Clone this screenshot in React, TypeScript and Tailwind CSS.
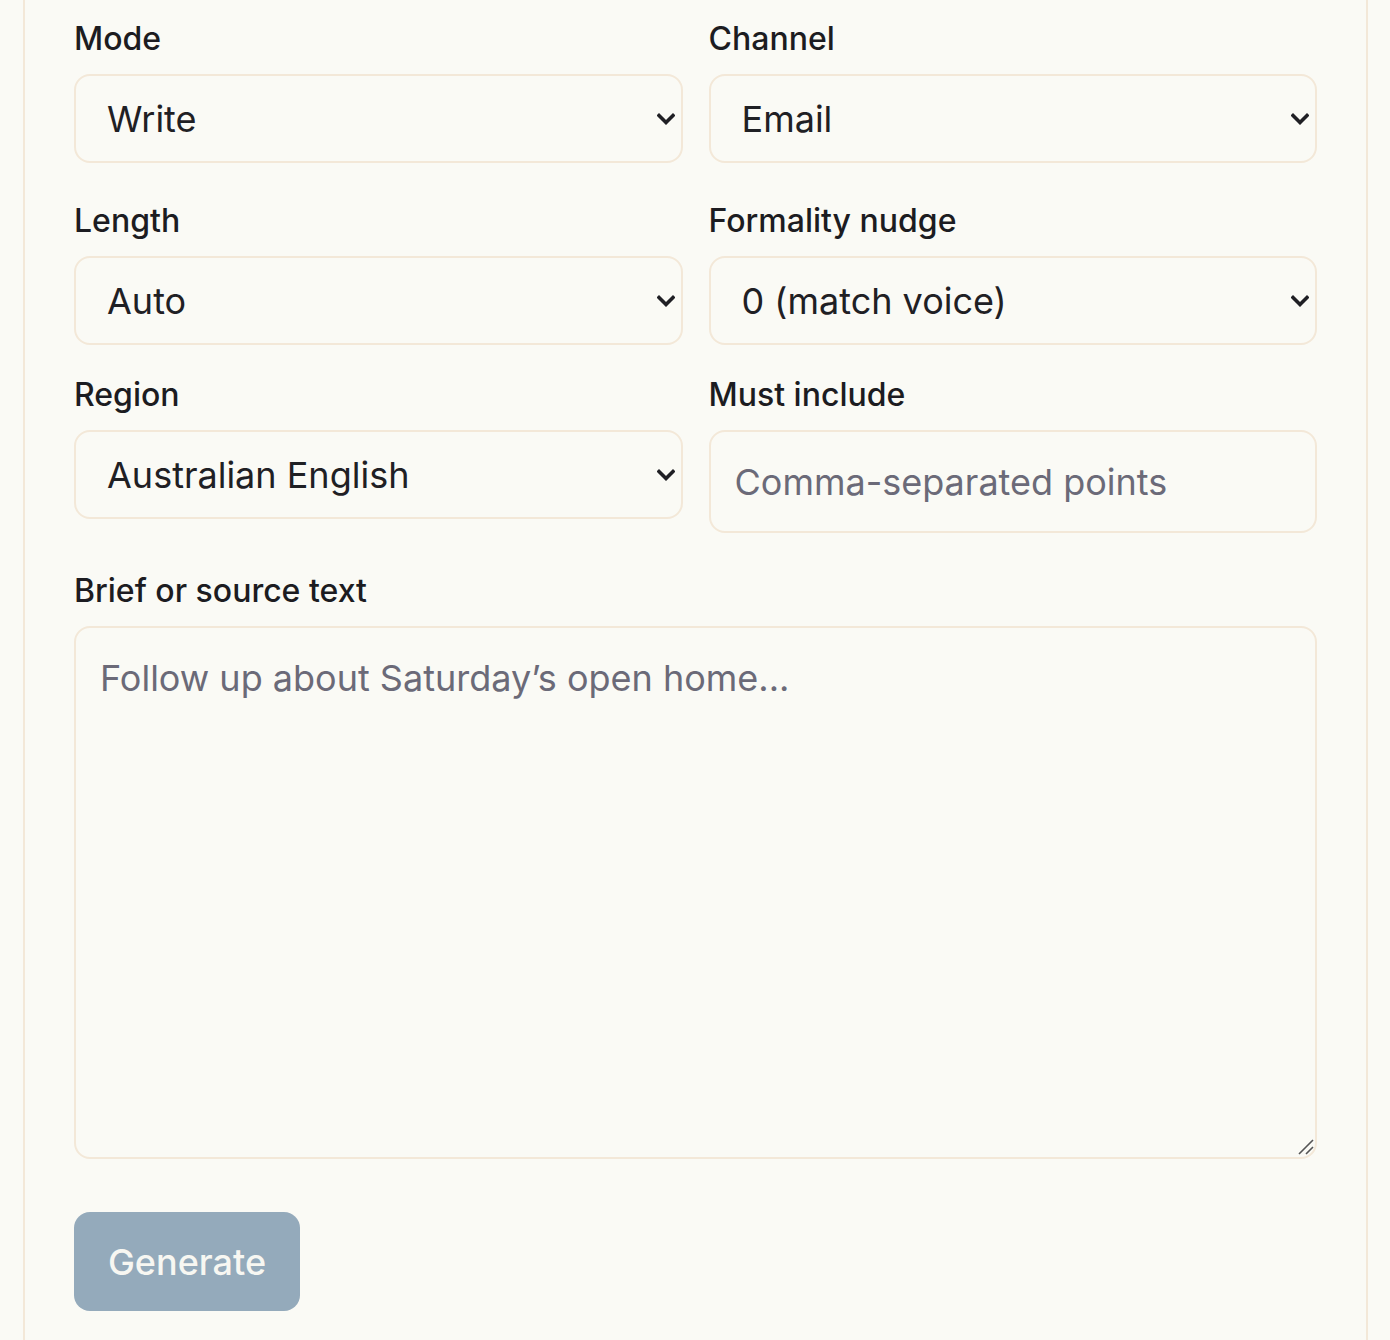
import React from 'react'

function Chevron() {
  return (
    <svg
      width="18"
      height="13"
      viewBox="0 0 18 13"
      className="pointer-events-none absolute right-[8px] top-1/2 -translate-y-1/2"
    >
      <path d="M2 3 L9 10 L16 3" fill="none" stroke="#1f1f24" strokeWidth="3.6" strokeLinecap="square" />
    </svg>
  )
}

function Field({ label, children }: { label: string; children: React.ReactNode }) {
  return (
    <div className="flex flex-col gap-[17px]">
      <label className="text-[32px] leading-[36px] font-medium text-[#1c1c21]">{label}</label>
      {children}
    </div>
  )
}

function Select({ value, options }: { value: string; options: string[] }) {
  return (
    <div className="relative">
      <select
        defaultValue={value}
        className="w-full h-[89px] appearance-none rounded-[16px] border-2 border-[#f3e8d8] bg-[#fafaf5] pl-[31px] pr-[40px] text-[36px] text-[#1f2024] outline-none"
      >
        {options.map(o => (
          <option key={o}>{o}</option>
        ))}
      </select>
      <Chevron />
    </div>
  )
}

export default function App() {
  return (
    <div className="min-h-[1340px] bg-[#fafaf5] font-['Inter',sans-serif]">
      <div className="ml-[23px] w-[1345px] min-h-[1340px] border-x-2 border-[#f3e8d8] px-[49px] pt-[21px] pb-[40px]">
        <div className="grid grid-cols-2 gap-x-[26px]">
          <Field label="Mode">
            <Select value="Write" options={['Write', 'Rewrite', 'Reply']} />
          </Field>
          <Field label="Channel">
            <Select value="Email" options={['Email', 'SMS', 'Social']} />
          </Field>
        </div>

        <div className="grid grid-cols-2 gap-x-[26px] mt-[40px]">
          <Field label="Length">
            <Select value="Auto" options={['Auto', 'Short', 'Medium', 'Long']} />
          </Field>
          <Field label="Formality nudge">
            <Select value="0 (match voice)" options={['-2', '-1', '0 (match voice)', '+1', '+2']} />
          </Field>
        </div>

        <div className="grid grid-cols-2 gap-x-[26px] items-start mt-[32px]">
          <Field label="Region">
            <Select value="Australian English" options={['Australian English', 'British English', 'American English']} />
          </Field>
          <Field label="Must include">
            <input
              type="text"
              placeholder="Comma-separated points"
              className="w-full h-[103px] rounded-[16px] border-2 border-[#f3e8d8] bg-[#fafaf5] px-[24px] text-[36px] text-[#1f2024] placeholder:text-[#6b6a78] outline-none"
            />
          </Field>
        </div>

        <div className="mt-[40px]">
          <Field label="Brief or source text">
            <div className="relative">
              <textarea
                placeholder="Follow up about Saturday’s open home..."
                className="block w-full h-[533px] resize-none rounded-[16px] border-2 border-[#f3e8d8] bg-[#fafaf5] px-[24px] py-[28px] text-[36px] leading-[44px] text-[#1f2024] placeholder:text-[#6b6a78] outline-none"
              />
              <svg width="16" height="16" viewBox="0 0 16 16" className="pointer-events-none absolute right-[3px] bottom-[4px]">
                <path d="M1 15 L15 1 M8 15 L15 8" stroke="#555" strokeWidth="1.6" />
              </svg>
            </div>
          </Field>
        </div>

        <button
          type="button"
          className="mt-[53px] w-[226px] h-[99px] rounded-[16px] bg-[#94aabb] text-[36px] font-medium text-[#f7f7f2]"
        >
          Generate
        </button>
      </div>
    </div>
  )
}
